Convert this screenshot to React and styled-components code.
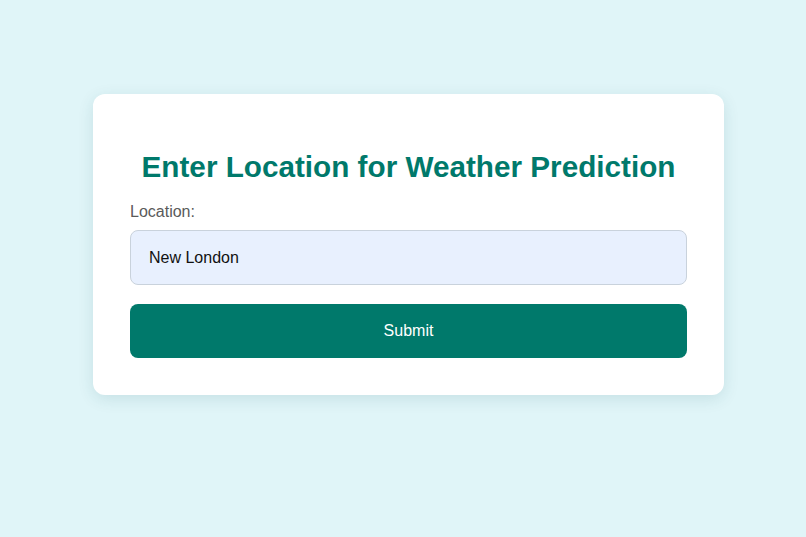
import React, { useState } from 'react';
import styled, { createGlobalStyle } from 'styled-components';

const GlobalStyle = createGlobalStyle`
  html, body {
    margin: 0;
    padding: 0;
    background: #e0f5f8;
    font-family: 'Liberation Sans', Arial, sans-serif;
  }
  * {
    box-sizing: border-box;
  }
`;

const Page = styled.div`
  width: 100%;
  height: 537px;
  display: flex;
  justify-content: center;
  align-items: flex-start;
  padding: 94px 0 0 11px;
`;

const Card = styled.form`
  width: 631px;
  background: #ffffff;
  border-radius: 12px;
  padding: 37px;
  box-shadow: 0 4px 16px rgba(0, 80, 90, 0.12);
  display: flex;
  flex-direction: column;
`;

const Title = styled.h1`
  margin: 19px 0 19px;
  text-align: center;
  white-space: nowrap;
  color: #00796b;
  font-size: 29.7px;
  font-weight: 700;
  line-height: 34px;
`;

const Label = styled.label`
  font-size: 16px;
  color: #5a5a5a;
  line-height: 18px;
  margin-bottom: 9px;
`;

const Input = styled.input`
  height: 55px;
  width: 100%;
  padding: 0 18px;
  font-family: 'Liberation Sans', Arial, sans-serif;
  font-size: 16px;
  color: #111111;
  background: #e8f0fe;
  border: 1px solid #c9d2dc;
  border-radius: 8px;
  outline: none;
  margin-bottom: 19px;
`;

const Button = styled.button`
  height: 54px;
  width: 100%;
  border: none;
  border-radius: 8px;
  background: #00796b;
  color: #ffffff;
  font-family: 'Liberation Sans', Arial, sans-serif;
  font-size: 16px;
  cursor: pointer;
`;

export default function App() {
  const [location, setLocation] = useState('New London');

  return (
    <>
      <GlobalStyle />
      <Page>
        <Card onSubmit={(e) => e.preventDefault()}>
          <Title>Enter Location for Weather Prediction</Title>
          <Label htmlFor="location">Location:</Label>
          <Input
            id="location"
            value={location}
            onChange={(e) => setLocation(e.target.value)}
          />
          <Button type="submit">Submit</Button>
        </Card>
      </Page>
    </>
  );
}
